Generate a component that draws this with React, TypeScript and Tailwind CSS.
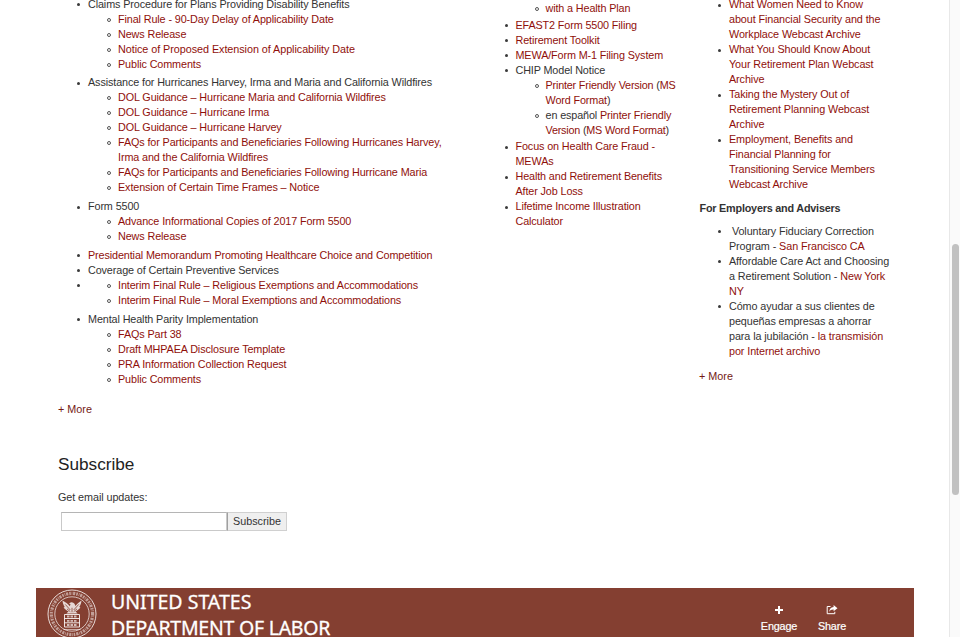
import React from "react";

const A = ({ children }: { children: React.ReactNode }) => (
  <a className="text-[#8f0f0a]">{children}</a>
);

type ItemProps = {
  lines?: React.ReactNode[];
  open?: boolean;
  children?: React.ReactNode;
};

function Item({ lines = [], open, children }: ItemProps) {
  return (
    <li className="flex">
      <span className="flex h-[15px] w-[11px] shrink-0 items-center">
        <span
          className={
            open
              ? "mt-px h-1 w-1 rounded-full border border-[#555]"
              : "mt-px h-[3px] w-[3px] rounded-full bg-[#3a3a3a]"
          }
        />
      </span>
      <div>
        {lines.map((l, i) => (
          <div key={i} className="h-[15px] whitespace-pre">
            {l}
          </div>
        ))}
        {children && <ul className="ml-[19px]">{children}</ul>}
      </div>
    </li>
  );
}

const links = (...t: string[]) => t.map((s) => <A>{s}</A>);

function NewsColumn() {
  return (
    <section className="w-[428px] shrink-0 tracking-[-0.11px]">
      <ul className="ml-[19px] mt-[-3.5px] flex flex-col">
        <Item lines={["Claims Procedure for Plans Providing Disability Benefits"]}>
          <Item open lines={links("Final Rule - 90-Day Delay of Applicability Date")} />
          <Item open lines={links("News Release")} />
          <Item
            open
            lines={[
              <span className="tracking-[-0.05px]">
                <A>Notice of Proposed Extension of Applicability Date</A>
              </span>,
            ]}
          />
          <Item open lines={links("Public Comments")} />
        </Item>
        <div className="h-[3.75px]" />
        <Item lines={["Assistance for Hurricanes Harvey, Irma and Maria and California Wildfires"]}>
          <Item open lines={links("DOL Guidance – Hurricane Maria and California Wildfires")} />
          <Item open lines={links("DOL Guidance – Hurricane Irma")} />
          <Item open lines={links("DOL Guidance – Hurricane Harvey")} />
          <Item
            open
            lines={links(
              "FAQs for Participants and Beneficiaries Following Hurricanes Harvey,",
              "Irma and the California Wildfires"
            )}
          />
          <Item open lines={links("FAQs for Participants and Beneficiaries Following Hurricane Maria")} />
          <Item open lines={links("Extension of Certain Time Frames – Notice")} />
        </Item>
        <div className="h-[3.75px]" />
        <Item lines={["Form 5500"]}>
          <Item open lines={links("Advance Informational Copies of 2017 Form 5500")} />
          <Item open lines={links("News Release")} />
        </Item>
        <div className="h-[3.75px]" />
        <Item lines={links("Presidential Memorandum Promoting Healthcare Choice and Competition")} />
        <Item lines={["Coverage of Certain Preventive Services"]} />
        <Item>
          <Item open lines={links("Interim Final Rule – Religious Exemptions and Accommodations")} />
          <Item open lines={links("Interim Final Rule – Moral Exemptions and Accommodations")} />
        </Item>
        <div className="h-[3.75px]" />
        <Item lines={["Mental Health Parity Implementation"]}>
          <Item open lines={links("FAQs Part 38")} />
          <Item open lines={links("Draft MHPAEA Disclosure Template")} />
          <Item open lines={links("PRA Information Collection Request")} />
          <Item open lines={links("Public Comments")} />
        </Item>
      </ul>
      <p className="mt-[15.5px] h-[15px] tracking-normal text-[#741a14]">+ More</p>
    </section>
  );
}

function ToolsColumn() {
  return (
    <section className="w-[213px] shrink-0 tracking-[-0.12px]">
      <ul className="ml-[18.5px] mt-px flex flex-col">
        <li className="ml-[30px]">
          <ul>
            <Item open lines={links("with a Health Plan")} />
          </ul>
        </li>
        <div className="h-[1.5px]" />
        <Item lines={links("EFAST2 Form 5500 Filing")} />
        <Item lines={links("Retirement Toolkit")} />
        <Item lines={links("MEWA/Form M-1 Filing System")} />
        <Item lines={["CHIP Model Notice"]}>
          <Item
            open
            lines={[
              <span className="tracking-[-0.18px]"><A>Printer Friendly Version</A> (<A>MS</A></span>,
              <><A>Word Format</A>)</>,
            ]}
          />
          <Item
            open
            lines={[
              <>en español <A>Printer Friendly</A></>,
              <span className="tracking-[-0.2px]"><A>Version</A> (<A>MS Word Format</A>)</span>,
            ]}
          />
        </Item>
        <div className="h-[1.5px]" />
        <Item lines={links("Focus on Health Care Fraud -", "MEWAs")} />
        <Item lines={links("Health and Retirement Benefits", "After Job Loss")} />
        <Item lines={links("Lifetime Income Illustration", "Calculator")} />
      </ul>
    </section>
  );
}

function WebcastColumn() {
  return (
    <section className="w-[200px] shrink-0 tracking-[-0.09px]">
      <ul className="ml-[19px] mt-[-3px]">
        <Item lines={links("What Women Need to Know", "about Financial Security and the", "Workplace Webcast Archive")} />
        <Item lines={links("What You Should Know About", "Your Retirement Plan Webcast", "Archive")} />
        <Item lines={links("Taking the Mystery Out of", "Retirement Planning Webcast", "Archive")} />
        <Item
          lines={links(
            "Employment, Benefits and",
            "Financial Planning for",
            "Transitioning Service Members",
            "Webcast Archive"
          )}
        />
      </ul>
      <h3 className="mt-[9px] h-[15px] pl-[0.5px] font-bold tracking-[-0.2px]">For Employers and Advisers</h3>
      <ul className="ml-[19px] mt-[7.5px]">
        <Item lines={["\u00a0Voluntary Fiduciary Correction", <>Program - <A>San Francisco CA</A></>]} />
        <Item
          lines={[
            "Affordable Care Act and Choosing",
            <>a Retirement Solution - <A>New York</A></>,
            <A>NY</A>,
          ]}
        />
        <Item
          lines={[
            "Cómo ayudar a sus clientes de",
            "pequeñas empresas a ahorrar",
            <>para la jubilación - <A>la transmisión</A></>,
            <A>por Internet archivo</A>,
          ]}
        />
      </ul>
      <p className="mt-[10px] h-[15px] tracking-normal text-[#741a14]">+ More</p>
    </section>
  );
}

function Seal() {
  return (
    <svg width="50" height="50" viewBox="0 0 50 50" fill="none" stroke="#fff" className="block">
      <circle cx="25" cy="25" r="24" strokeWidth="1" opacity=".8" />
      <circle cx="25" cy="25" r="20.6" strokeWidth="3.2" strokeDasharray="1.6 .9 .7 .8 2.2 1" opacity=".5" />
      <circle cx="25" cy="25" r="17.2" strokeWidth=".9" opacity=".75" />
      <g transform="translate(-3 -2.5) scale(1.12)">
        <path
          d="M16.5 12.5c.3 2.5.8 4.2 2 5.8l-1 .4c1.200 1.700 2.700 2.800 4.500 3.300l-2 2h10l-2-2c1.800-.5 3.300-1.600 4.500-3.300l-1-.4c1.200-1.600 1.700-3.300 2-5.800-2 1.300-4 2.800-5.500 5-.3-1.800-1.200-3.300-3.200-3.500-1.200-.1-2 .7-2.300 1.500l1.200.3-.7 1.900c-1.500-2.400-4-3.900-6.500-5.200z"
          fill="#fff"
          stroke="none"
          opacity=".8"
        />
        <path d="M19 16l4.500 5M31 16l-4.500 5M25 19v4M20.500 20l3 2.500M29.500 20l-3 2.500" stroke="#843f31" strokeWidth=".7" />
      </g>
      <path d="M17.5 25.500h15v12.500h-15zM17.500 29.500h15M17.500 33.800h15" strokeWidth="1" opacity=".85" />
      <path d="M20 27.500h10M20 31.800h10M20 36h10" strokeWidth="1.800" strokeDasharray="2.500 1" opacity=".65" />
      <path d="M16.500 40.500h17" strokeWidth=".8" opacity=".7" />
    </svg>
  );
}

export default function App() {
  return (
    <div className="flex h-[637px] w-[960px] overflow-hidden bg-white font-['Liberation_Sans',Arial,sans-serif] text-[10.8px] leading-[15px] text-[#333]">
      <main className="flex w-[949px] shrink-0 flex-col">
        <div className="flex h-[450px] shrink-0 pl-[58px]">
          <NewsColumn />
          <ToolsColumn />
          <WebcastColumn />
        </div>
        <section className="flex h-[138px] shrink-0 flex-col pl-[58px]">
          <h2 className="mt-1 h-5 text-[17.2px] leading-5 text-[#222]">Subscribe</h2>
          <p className="mt-[15.5px] h-[15px] tracking-[-0.07px]">Get email updates:</p>
          <form className="ml-[3px] mt-[7.5px] flex h-[19px]">
            <input
              aria-label="Email address"
              className="h-[19px] w-[166px] border border-[#c9c9c9] border-t-[#b5b5b5] bg-white outline-none"
            />
            <button
              type="button"
              className="h-[19px] w-[60px] border border-[#d0d0d0] border-l-[#a0a0a0] bg-[#efefef] leading-[17px] text-[#333]"
            >
              Subscribe
            </button>
          </form>
        </section>
        <footer className="ml-9 flex h-[49px] w-[877.5px] shrink-0 overflow-hidden bg-[#843f31] text-white">
          <div className="ml-[11px] mt-px shrink-0">
            <Seal />
          </div>
          <div className="ml-3.5 mt-px w-[640px] shrink-0 whitespace-nowrap font-['Noto_Sans',sans-serif] text-[19.5px] leading-[26px] [-webkit-text-stroke:0.3px_white]">
            <div>UNITED STATES</div>
            <div className="tracking-[-0.24px]">DEPARTMENT OF LABOR</div>
          </div>
          <div className="ml-[9px] flex w-[38px] flex-col items-center">
            <svg width="8" height="8" viewBox="0 0 8 8" className="mt-[18px] block">
              <path d="M3 0h2v3h3v2H5v3H3V5H0V3h3z" fill="#fff" />
            </svg>
            <span className="mt-[5px] h-[15px] text-[10.8px] tracking-[-0.15px] [-webkit-text-stroke:0.2px_white]">Engage</span>
          </div>
          <div className="ml-[15px] flex w-[38px] flex-col items-center">
            <svg width="12" height="10" viewBox="0 0 12 10" className="mt-[17px] block">
              <path d="M4.5 1.5H1.2v7.200h7.600V6.800" fill="none" stroke="#fff" strokeWidth="1" />
              <path d="M7.6 0L11.5 3.200 7.600 6.300V4.500C5.500 4.400 4.200 5 3.300 6.900 3.300 4 4.700 2.200 7.600 2z" fill="#fff" />
            </svg>
            <span className="mt-1 h-[15px] text-[10.8px] tracking-[-0.15px] [-webkit-text-stroke:0.2px_white]">Share</span>
          </div>
        </footer>
      </main>
      <aside className="w-[11px] shrink-0 border-l border-[#e8e8e8] bg-[#fafafa] pl-0.5 pt-[244px]">
        <div className="h-[251px] w-[6.5px] rounded-full bg-[#c1c1c1]" />
      </aside>
    </div>
  );
}
